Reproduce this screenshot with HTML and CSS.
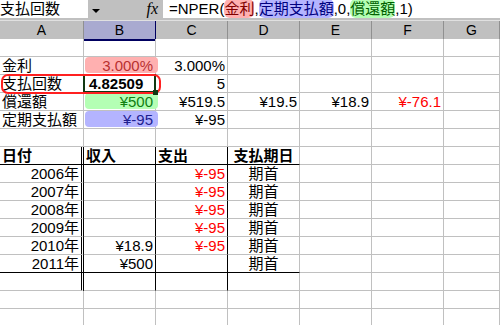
FILE: index.html
```html
<!DOCTYPE html>
<html lang="ja">
<head>
  <meta charset="UTF-8" />
  <title>NPER</title>
  <link rel="stylesheet" href="styles.css">
</head>
<body>

  <div class="bar">
    <div class="namebox">支払回数</div>
    <div class="drop"><span class="tri"></span></div>
    <div class="fx"><i>fx</i></div>
    <div class="formula">=NPER(<span class="ref pink">金利</span>,<span class="ref blue">定期支払額</span>,0,<span class="ref green">償還額</span>,1)</div>
  </div>

  <div class="heads">
    <div class="h">A</div>
    <div class="h sel">B</div>
    <div class="h">C</div>
    <div class="h">D</div>
    <div class="h">E</div>
    <div class="h">F</div>
    <div class="h">G</div>
  </div>

  <div class="sheet">
    <!-- 1 -->
    <div class="c"></div><div class="c"></div><div class="c"></div><div class="c"></div><div class="c"></div><div class="c"></div><div class="c"></div>
    <!-- 2 -->
    <div class="c">金利</div>
    <div class="c r hl pink"><span>3.000%</span></div>
    <div class="c r">3.000%</div>
    <div class="c"></div><div class="c"></div><div class="c"></div><div class="c"></div>
    <!-- 3 -->
    <div class="c">支払回数</div>
    <div class="c act"><b>4.82509</b></div>
    <div class="c r">5</div>
    <div class="c"></div><div class="c"></div><div class="c"></div><div class="c"></div>
    <!-- 4 -->
    <div class="c">償還額</div>
    <div class="c r hl green"><span>¥500</span></div>
    <div class="c r">¥519.5</div>
    <div class="c r">¥19.5</div>
    <div class="c r">¥18.9</div>
    <div class="c r neg">¥-76.1</div>
    <div class="c"></div>
    <!-- 5 -->
    <div class="c">定期支払額</div>
    <div class="c r hl blue"><span>¥-95</span></div>
    <div class="c r">¥-95</div>
    <div class="c"></div><div class="c"></div><div class="c"></div><div class="c"></div>
    <!-- 6 -->
    <div class="c"></div><div class="c"></div><div class="c"></div><div class="c"></div><div class="c"></div><div class="c"></div><div class="c"></div>
    <!-- 7: table head -->
    <div class="c th dbl">日付</div>
    <div class="c th ln">収入</div>
    <div class="c th ln">支出</div>
    <div class="c th ctr">支払期日</div>
    <div class="c"></div><div class="c"></div><div class="c"></div>
    <!-- 8 -->
    <div class="c r dbl">2006年</div><div class="c ln"></div><div class="c r ln neg">¥-95</div><div class="c ctr">期首</div>
    <div class="c"></div><div class="c"></div><div class="c"></div>
    <!-- 9 -->
    <div class="c r dbl">2007年</div><div class="c ln"></div><div class="c r ln neg">¥-95</div><div class="c ctr">期首</div>
    <div class="c"></div><div class="c"></div><div class="c"></div>
    <!-- 10 -->
    <div class="c r dbl">2008年</div><div class="c ln"></div><div class="c r ln neg">¥-95</div><div class="c ctr">期首</div>
    <div class="c"></div><div class="c"></div><div class="c"></div>
    <!-- 11 -->
    <div class="c r dbl">2009年</div><div class="c ln"></div><div class="c r ln neg">¥-95</div><div class="c ctr">期首</div>
    <div class="c"></div><div class="c"></div><div class="c"></div>
    <!-- 12 -->
    <div class="c r dbl">2010年</div><div class="c r ln">¥18.9</div><div class="c r ln neg">¥-95</div><div class="c ctr">期首</div>
    <div class="c"></div><div class="c"></div><div class="c"></div>
    <!-- 13 -->
    <div class="c r dbl end">2011年</div><div class="c r ln end">¥500</div><div class="c ln end"></div><div class="c ctr end">期首</div>
    <div class="c"></div><div class="c"></div><div class="c"></div>
    <!-- 14 -->
    <div class="c dbl"></div><div class="c ln"></div><div class="c ln"></div><div class="c"></div>
    <div class="c"></div><div class="c"></div><div class="c"></div>
    <!-- 15 -->
    <div class="c"></div><div class="c"></div><div class="c"></div><div class="c"></div><div class="c"></div><div class="c"></div><div class="c"></div>
    <!-- 16 -->
    <div class="c"></div><div class="c"></div><div class="c"></div><div class="c"></div><div class="c"></div><div class="c"></div><div class="c"></div>

    <div class="callout"></div>
  </div>

</body>
</html>
```

FILE: styles.css
```css
body {
  margin: 0;
  width: 500px;
  height: 325px;
  overflow: hidden;
  background: #fff;
  font-family: "Liberation Sans", "Noto Sans CJK JP", sans-serif;
  font-size: 15px;
  color: #000;
}

/* formula bar */
.bar {
  display: flex;
  height: 20px;
  background: #c0c0c0;
}
.namebox {
  width: 88px;
  height: 18px;
  line-height: 18px;
  background: #fff;
  white-space: nowrap;
  overflow: hidden;
}
.drop {
  width: 16px;
  height: 18px;
  display: flex;
  align-items: center;
  justify-content: center;
}
.tri {
  width: 0;
  height: 0;
  border-left: 4px solid transparent;
  border-right: 4px solid transparent;
  border-top: 4px solid #000;
  margin-top: 3px;
}
.fx {
  width: 59px;
  height: 18px;
  line-height: 18px;
  text-align: right;
  padding-right: 5px;
  box-sizing: border-box;
  font-family: "Liberation Serif", serif;
  font-size: 16px;
}
.formula {
  flex: 1;
  height: 18px;
  line-height: 18px;
  background: #fff;
  padding-left: 6px;
  white-space: nowrap;
}
.ref {
  border-radius: 6px;
  padding: 1px 0;
}
.ref.pink { background: #ffb0b0; color: #800000; }
.ref.blue { background: #b4b4ff; color: #000080; }
.ref.green { background: #b4ffb4; color: #006000; }

/* column headers */
.heads {
  display: grid;
  grid-template-columns: 84px 72px 72px 72px 72px 72px 56px;
  height: 19px;
  background: #c0c0c0;
  border-top: 1px solid #e0e0e0;
  box-sizing: border-box;
}
.h {
  border-right: 1px solid #909090;
  text-align: center;
  line-height: 18px;
  font-size: 14px;
}
.h.sel {
  background: #a9aad0;
  border-right-color: #000060;
  border-bottom: 2px solid #000060;
}

/* grid */
.sheet {
  position: relative;
  display: grid;
  grid-template-columns: 84px 72px 72px 72px 72px 72px 56px;
  grid-auto-rows: 18px;
}
.c {
  box-sizing: border-box;
  border-right: 1px solid #c0c0c0;
  border-bottom: 1px solid #c0c0c0;
  padding: 0 2px;
  line-height: 17px;
  white-space: nowrap;
}
.r { text-align: right; }
.ctr { text-align: center; }
.neg { color: #ff0000; }
.th { font-weight: bold; border-bottom-color: #000; }
.end { border-bottom-color: #000; }
.dbl { border-right: 3px double #000; }
.ln { border-right-color: #000; }

/* highlighted argument cells */
.hl { position: relative; }
.hl::before {
  content: "";
  position: absolute;
  top: 0;
  left: 1px;
  right: -3px;
  bottom: 1px;
  border-radius: 4px;
}
.hl span { position: relative; }
.hl.pink::before { background: #ffb0b0; }
.hl.pink { color: #b83030; }
.hl.green::before { background: #b4ffb4; }
.hl.green { color: #108010; }
.hl.blue::before { background: #b4b4ff; }
.hl.blue { color: #202090; }

/* active cell */
.act {
  position: relative;
  padding-left: 5px;
}
.act::after {
  content: "";
  position: absolute;
  top: -1px;
  left: -1px;
  right: -1px;
  bottom: -1px;
  border: 2px solid #123812;
}
.act::before {
  content: "";
  position: absolute;
  right: -3px;
  bottom: -3px;
  width: 5px;
  height: 5px;
  background: #123812;
  z-index: 1;
}

.callout {
  position: absolute;
  left: 1px;
  top: 35px;
  width: 160px;
  height: 20px;
  box-sizing: border-box;
  border: 2px solid #ff2020;
  border-radius: 7px;
}
```
